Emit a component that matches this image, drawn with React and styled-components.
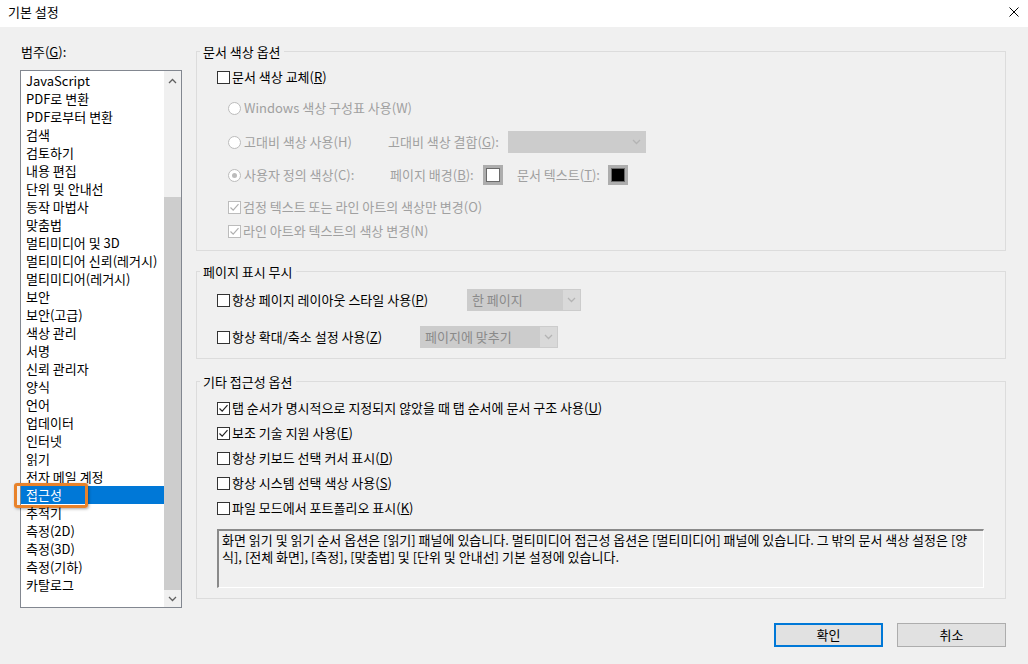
import React from "react";
import styled, { createGlobalStyle } from "styled-components";

const GlobalStyle = createGlobalStyle`
  html, body {
    margin: 0;
    padding: 0;
    background: #f0f0f0;
  }
  body {
    font-family: "Noto Sans CJK KR", "Noto Sans", sans-serif;
    font-size: 13px;
    color: #000;
  }
`;

const Window = styled.div`
  width: 1028px;
  height: 664px;
  background: #f0f0f0;
  display: flex;
  flex-direction: column;
  overflow: hidden;
`;

const TitleBar = styled.div`
  height: 27px;
  flex-shrink: 0;
  background: #fff;
  display: flex;
  align-items: center;
  justify-content: space-between;
  padding: 0 9px 3px 8px;
  box-sizing: border-box;
  line-height: 16px;
`;

const CloseIcon = styled.svg`
  width: 10px;
  height: 10px;
  display: block;
`;

const Main = styled.div`
  display: flex;
  align-items: flex-start;
  padding-left: 20px;
`;

const LeftCol = styled.div`
  width: 162px;
  padding-top: 17px;
  display: flex;
  flex-direction: column;
`;

const FieldLabel = styled.div`
  line-height: 16px;
  height: 16px;
  padding-left: 1px;
  margin-bottom: 10px;
`;

const ListBox = styled.div`
  height: 538px;
  box-sizing: border-box;
  border: 1px solid #828790;
  background: #fff;
  display: flex;
`;

const Items = styled.div`
  flex: 1;
  padding-top: 1px;
`;

const Item = styled.div`
  position: relative;
  height: 18px;
  line-height: 18px;
  padding-left: 5px;
  white-space: nowrap;
  background: ${(p) => (p.$selected ? "#0078d7" : "transparent")};
  color: ${(p) => (p.$selected ? "#fff" : "#000")};
`;

const Highlight = styled.div`
  position: absolute;
  left: -7px;
  top: -3px;
  width: 74px;
  height: 25px;
  box-sizing: border-box;
  border: 3px solid #e8822a;
  border-radius: 3px;
  box-shadow: 1px 1px 3px rgba(0, 0, 0, 0.35);
`;

const ScrollBar = styled.div`
  width: 17px;
  background: #f0f0f0;
  display: flex;
  flex-direction: column;
`;

const ScrollButton = styled.div`
  height: ${(p) => p.$h}px;
  display: flex;
  align-items: center;
  justify-content: center;
`;

const Track = styled.div`
  flex: 1;
  display: flex;
  flex-direction: column;
  justify-content: flex-end;
`;

const Thumb = styled.div`
  height: 393px;
  background: #cdcdcd;
`;

const RightCol = styled.div`
  width: 810px;
  margin-left: 14px;
  padding-top: 24px;
  display: flex;
  flex-direction: column;
`;

const Group = styled.div`
  position: relative;
  border: 1px solid #dcdcdc;
  margin-top: ${(p) => p.$mt || 0}px;
  padding: ${(p) => p.$pt}px 0 ${(p) => p.$pb}px;
  display: flex;
  flex-direction: column;
`;

const Legend = styled.span`
  position: absolute;
  top: -8px;
  left: 3px;
  padding: 0 3px;
  line-height: 16px;
  background: #f0f0f0;
`;

const Row = styled.div`
  display: flex;
  align-items: center;
  height: 24px;
  margin-top: ${(p) => p.$mt || 0}px;
  padding-left: ${(p) => p.$indent}px;
  white-space: nowrap;
  color: ${(p) => (p.$disabled ? "#a0a0a0" : "#000")};
`;

const Cell = styled.div`
  display: flex;
  align-items: center;
  width: ${(p) => (p.$w ? `${p.$w}px` : "auto")};
  padding-left: ${(p) => p.$pl || 0}px;
  box-sizing: border-box;
  flex-shrink: 0;
`;

const Text = styled.span`
  line-height: 16px;
`;

const Box = styled.span`
  width: 13px;
  height: 13px;
  box-sizing: border-box;
  border: 1px solid ${(p) => (p.$disabled ? "#bcbcbc" : "#333")};
  background: #fff;
  margin-right: 2px;
  display: flex;
  align-items: center;
  justify-content: center;
  flex-shrink: 0;
`;

const Circle = styled.span`
  width: 13px;
  height: 13px;
  box-sizing: border-box;
  border-radius: 50%;
  border: 1px solid #bcbcbc;
  background: #fff;
  margin-right: 3px;
  display: flex;
  align-items: center;
  justify-content: center;
  flex-shrink: 0;
`;

const Dot = styled.span`
  width: 5px;
  height: 5px;
  border-radius: 50%;
  background: #bcbcbc;
`;

const Select = styled.div`
  width: ${(p) => p.$w}px;
  height: 22px;
  box-sizing: border-box;
  border: 1px solid #cccccc;
  background: #cccccc;
  display: flex;
  align-items: center;
  color: #8a8a8a;
  flex-shrink: 0;
`;

const SelectText = styled.span`
  flex: 1;
  padding-left: 4px;
  line-height: 16px;
`;

const SelectArrow = styled.span`
  width: 17px;
  height: 100%;
  display: flex;
  align-items: center;
  justify-content: center;
  background: ${(p) => (p.$split ? "#d9d9d9" : "transparent")};
`;

const Swatch = styled.span`
  width: 20px;
  height: 20px;
  box-sizing: border-box;
  background: #adadad;
  padding: 3px;
  display: flex;
  flex-shrink: 0;
`;

const SwatchFill = styled.span`
  flex: 1;
  border: 1px solid #6a6a6a;
  background: ${(p) => p.$color};
`;

const Note = styled.div`
  height: 59px;
  margin: 9px 21px 0 20px;
  box-sizing: border-box;
  border-top: 2px solid #8a8a8a;
  border-left: 2px solid #8a8a8a;
  border-right: 1px solid #fff;
  border-bottom: 1px solid #fff;
  padding: 0 3px;
  line-height: 17px;
  white-space: nowrap;
`;

const Footer = styled.div`
  display: flex;
  justify-content: flex-end;
  gap: 14px;
  padding: 15px 22px 0 0;
`;

const Button = styled.div`
  width: 109px;
  height: 24px;
  box-sizing: border-box;
  background: #e1e1e1;
  border: ${(p) => (p.$primary ? "2px solid #0078d7" : "1px solid #adadad")};
  display: flex;
  align-items: center;
  justify-content: center;
  line-height: 16px;
`;

const categories = [
  "JavaScript",
  "PDF로 변환",
  "PDF로부터 변환",
  "검색",
  "검토하기",
  "내용 편집",
  "단위 및 안내선",
  "동작 마법사",
  "맞춤법",
  "멀티미디어 및 3D",
  "멀티미디어 신뢰(레거시)",
  "멀티미디어(레거시)",
  "보안",
  "보안(고급)",
  "색상 관리",
  "서명",
  "신뢰 관리자",
  "양식",
  "언어",
  "업데이터",
  "인터넷",
  "읽기",
  "전자 메일 계정",
  "접근성",
  "추적기",
  "측정(2D)",
  "측정(3D)",
  "측정(기하)",
  "카탈로그",
];

const Check = ({ checked, disabled }) => (
  <Box $disabled={disabled}>
    {checked && (
      <svg width="11" height="11" viewBox="0 0 11 11">
        <polyline
          points="1.5,5.5 4.2,8.2 9.5,2.2"
          fill="none"
          stroke={disabled ? "#b0b0b0" : "#222"}
          strokeWidth="1.2"
        />
      </svg>
    )}
  </Box>
);

const Radio = ({ selected }) => <Circle>{selected && <Dot />}</Circle>;

const Chevron = ({ up, color = "#606060" }) => (
  <svg width="9" height="6" viewBox="0 0 9 6">
    <polyline
      points={up ? "1,5 4.5,1.5 8,5" : "1,1 4.5,4.5 8,1"}
      fill="none"
      stroke={color}
      strokeWidth="1.3"
    />
  </svg>
);

const Dropdown = ({ w, text, split }) => (
  <Select $w={w}>
    <SelectText>{text}</SelectText>
    <SelectArrow $split={split}>
      <Chevron color="#b4b4b4" />
    </SelectArrow>
  </Select>
);

const Mn = ({ label, k, tail = "" }) => (
  <Text>
    {label}(<u>{k}</u>){tail}
  </Text>
);

export default function App() {
  return (
    <Window>
      <GlobalStyle />
      <TitleBar>
        <span>기본 설정</span>
        <CloseIcon viewBox="0 0 10 10">
          <path d="M0.5 0.5 L9.5 9.5 M9.5 0.5 L0.5 9.5" stroke="#000" strokeWidth="1" />
        </CloseIcon>
      </TitleBar>

      <Main>
        <LeftCol>
          <FieldLabel>
            범주(<u>G</u>):
          </FieldLabel>
          <ListBox>
            <Items>
              {categories.map((c) => (
                <Item key={c} $selected={c === "접근성"}>
                  {c}
                  {c === "접근성" && <Highlight />}
                </Item>
              ))}
            </Items>
            <ScrollBar>
              <ScrollButton $h={20}>
                <Chevron up />
              </ScrollButton>
              <Track>
                <Thumb />
              </Track>
              <ScrollButton $h={17}>
                <Chevron />
              </ScrollButton>
            </ScrollBar>
          </ListBox>
        </LeftCol>

        <RightCol>
          <Group $pt={13} $pb={7}>
            <Legend>문서 색상 옵션</Legend>
            <Row $indent={20}>
              <Check />
              <Mn label="문서 색상 교체" k="R" />
            </Row>
            <Row $indent={31} $mt={7} $disabled>
              <Radio />
              <Text>Windows 색상 구성표 사용(W)</Text>
            </Row>
            <Row $indent={31} $mt={10} $disabled>
              <Cell $w={160}>
                <Radio />
                <Text>고대비 색상 사용(H)</Text>
              </Cell>
              <Cell $w={120}>
                <Mn label="고대비 색상 결합" k="G" tail=":" />
              </Cell>
              <Dropdown w={138} />
            </Row>
            <Row $indent={31} $mt={9} $disabled>
              <Cell $w={162}>
                <Radio selected />
                <Text>사용자 정의 색상(C):</Text>
              </Cell>
              <Cell $w={93}>
                <Mn label="페이지 배경" k="B" tail=":" />
              </Cell>
              <Swatch>
                <SwatchFill $color="#fff" />
              </Swatch>
              <Cell $w={105} $pl={14}>
                <Mn label="문서 텍스트" k="T" tail=":" />
              </Cell>
              <Swatch>
                <SwatchFill $color="#000" />
              </Swatch>
            </Row>
            <Row $indent={31} $mt={8} $disabled>
              <Check checked disabled />
              <Text>검정 텍스트 또는 라인 아트의 색상만 변경(O)</Text>
            </Row>
            <Row $indent={31} $disabled>
              <Check checked disabled />
              <Text>라인 아트와 텍스트의 색상 변경(N)</Text>
            </Row>
          </Group>

          <Group $mt={20} $pt={16} $pb={9}>
            <Legend>페이지 표시 무시</Legend>
            <Row $indent={20}>
              <Cell $w={250}>
                <Check />
                <Mn label="항상 페이지 레이아웃 스타일 사용" k="P" />
              </Cell>
              <Dropdown w={114} text="한 페이지" split />
            </Row>
            <Row $indent={20} $mt={13}>
              <Cell $w={203}>
                <Check />
                <Mn label="항상 확대/축소 설정 사용" k="Z" />
              </Cell>
              <Dropdown w={138} text="페이지에 맞추기" split />
            </Row>
          </Group>

          <Group $mt={22} $pt={14} $pb={10}>
            <Legend>기타 접근성 옵션</Legend>
            <Row $indent={20}>
              <Check checked />
              <Mn label="탭 순서가 명시적으로 지정되지 않았을 때 탭 순서에 문서 구조 사용" k="U" />
            </Row>
            <Row $indent={20} $mt={1}>
              <Check checked />
              <Mn label="보조 기술 지원 사용" k="E" />
            </Row>
            <Row $indent={20} $mt={1}>
              <Check />
              <Mn label="항상 키보드 선택 커서 표시" k="D" />
            </Row>
            <Row $indent={20} $mt={1}>
              <Check />
              <Mn label="항상 시스템 선택 색상 사용" k="S" />
            </Row>
            <Row $indent={20} $mt={1}>
              <Check />
              <Mn label="파일 모드에서 포트폴리오 표시" k="K" />
            </Row>
            <Note>
              화면 읽기 및 읽기 순서 옵션은 [읽기] 패널에 있습니다. 멀티미디어 접근성 옵션은 [멀티미디어] 패널에 있습니다. 그 밖의 문서 색상 설정은 [양
              <br />
              식], [전체 화면], [측정], [맞춤법] 및 [단위 및 안내선] 기본 설정에 있습니다.
            </Note>
          </Group>
        </RightCol>
      </Main>

      <Footer>
        <Button $primary>확인</Button>
        <Button>취소</Button>
      </Footer>
    </Window>
  );
}
